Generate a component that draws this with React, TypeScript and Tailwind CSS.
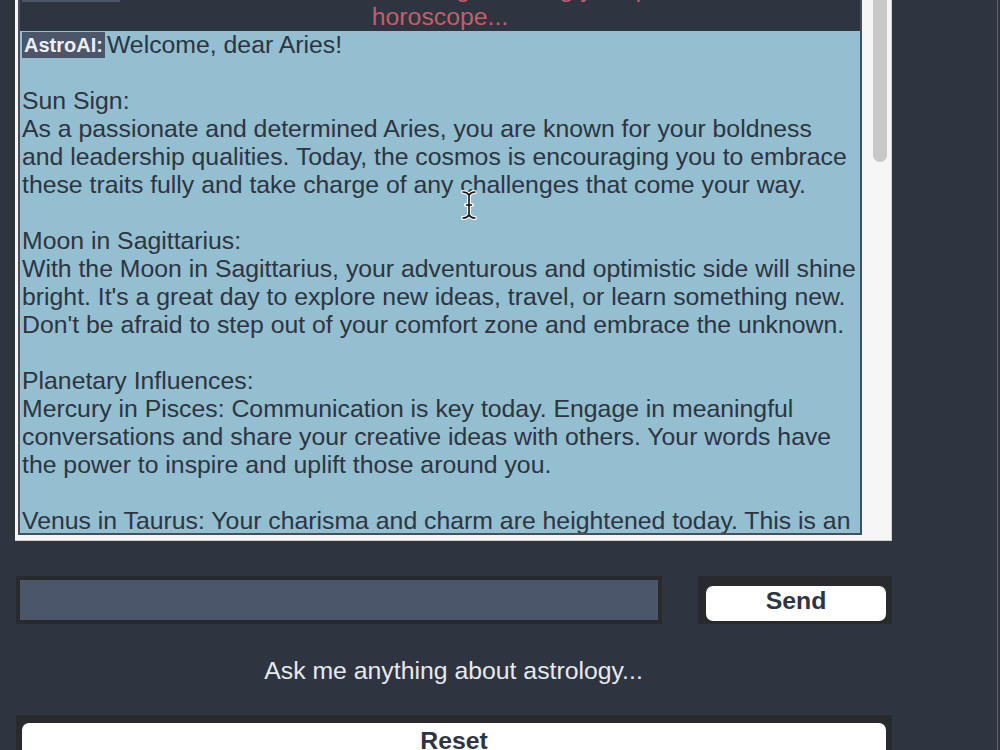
import React from 'react';

const font = { fontFamily: '"Liberation Sans", Arial, Helvetica, sans-serif' };

type Line = { label?: string; text: string };

const replyLines: Line[] = [
    { label: 'AstroAI:', text: 'Welcome, dear Aries!' },
    { text: '' },
    { text: 'Sun Sign:' },
    { text: 'As a passionate and determined Aries, you are known for your boldness' },
    { text: 'and leadership qualities. Today, the cosmos is encouraging you to embrace' },
    { text: 'these traits fully and take charge of any challenges that come your way.' },
    { text: '' },
    { text: 'Moon in Sagittarius:' },
    { text: 'With the Moon in Sagittarius, your adventurous and optimistic side will shine' },
    { text: "bright. It's a great day to explore new ideas, travel, or learn something new." },
    { text: "Don't be afraid to step out of your comfort zone and embrace the unknown." },
    { text: '' },
    { text: 'Planetary Influences:' },
    { text: 'Mercury in Pisces: Communication is key today. Engage in meaningful' },
    { text: 'conversations and share your creative ideas with others. Your words have' },
    { text: 'the power to inspire and uplift those around you.' },
    { text: '' },
    { text: 'Venus in Taurus: Your charisma and charm are heightened today. This is an' },
    { text: 'opportunity to strengthen your relationships and attract new connections.' },
];

function IBeam() {
    return (
        <svg className="absolute left-[441px] top-[190px]" width="16" height="30" viewBox="0 0 16 30">
            <path
                d="M2 2 Q6 2 8 5 Q10 2 14 2 M8 5 V25 M2 28 Q6 28 8 25 Q10 28 14 28 M5 15 H11"
                fill="none"
                stroke="#ffffff"
                strokeWidth="4"
                strokeLinecap="round"
            />
            <path
                d="M2 2 Q6 2 8 5 Q10 2 14 2 M8 5 V25 M2 28 Q6 28 8 25 Q10 28 14 28 M5.5 15 H10.5"
                fill="none"
                stroke="#111111"
                strokeWidth="1.6"
                strokeLinecap="round"
            />
        </svg>
    );
}

export default function App() {
    return (
        <div className="relative flex w-[1000px] h-[750px] overflow-hidden bg-[#2e3440]" style={font}>
            <div className="flex flex-col w-[877px] ml-[15px]">
                {/* Chat log frame */}
                <div className="flex shrink-0 h-[541px] pl-[3px] pb-[5px] bg-[#f6f6f6] border-b border-r border-[#cfcfcf]">
                    <div className="relative flex-1 overflow-hidden bg-[#2e3440] border-l-2 border-r-2 border-b-2 border-[#474e5c]">
                        <div className="-mt-[25px] text-[24.8px]">
                            <div className="flex items-center h-[28px] pl-[2px] whitespace-nowrap">
                                <span className="inline-block shrink-0 w-[98px] h-[26px] bg-[#4c566a]" />
                                <span className="flex-1 text-center text-[#bf616a]">
                                    Please wait while I am generating your personalized
                                </span>
                            </div>
                            <div className="h-[28px] leading-[28px] text-center text-[#bf616a]">horoscope...</div>
                            <div className="bg-[#93bfd0] text-[#2e3440]">
                                {replyLines.map((line, i) => (
                                    <div key={i} className="flex items-center h-[28px] pl-[2px] whitespace-nowrap">
                                        {line.label && (
                                            <span className="inline-flex items-center h-[26px] px-[2px] mr-[2px] bg-[#4c566a] text-[#eceff4] text-[20px] font-bold">
                                                {line.label}
                                            </span>
                                        )}
                                        <span>{line.text}</span>
                                    </div>
                                ))}
                            </div>
                        </div>
                        <IBeam />
                    </div>
                    {/* Scrollbar */}
                    <div className="w-[29px] pl-[11px]">
                        <div className="w-[14px] h-[162px] bg-[#c8c8c8] rounded-b-full" />
                    </div>
                </div>

                {/* Input row */}
                <div className="flex shrink-0 items-stretch gap-[36px] h-[48px] mt-[35px] ml-[1px]">
                    <div className="w-[646px] p-[4px] bg-[#292a2e]">
                        <input type="text" className="w-full h-full bg-[#4c566a] text-white outline-none" />
                    </div>
                    <div className="w-[194px] pl-[8px] pr-[6px] pt-[10px] pb-[3px] bg-[#292a2e]">
                        <button className="w-full h-full pb-[5px] bg-white rounded-[7px] text-[24.8px] leading-none font-bold text-[#2e3440]">
                            Send
                        </button>
                    </div>
                </div>

                <div className="flex shrink-0 items-center justify-center h-[91px] pt-[3px] text-[24.8px] text-[#e5e9f0]">
                    Ask me anything about astrology...
                </div>

                <div className="shrink-0 ml-[1px] pl-[6px] pr-[6px] pt-[8px] bg-[#292a2e]">
                    <button className="w-full h-[40px] bg-white rounded-t-[7px] text-[24.8px] font-bold text-[#2e3440] leading-[36px] flex justify-center items-start">
                        Reset
                    </button>
                </div>
            </div>
            <div className="flex-1" />
            <div className="w-px bg-[#60646e]" />
            <div className="w-[2px]" />
        </div>
    );
}
